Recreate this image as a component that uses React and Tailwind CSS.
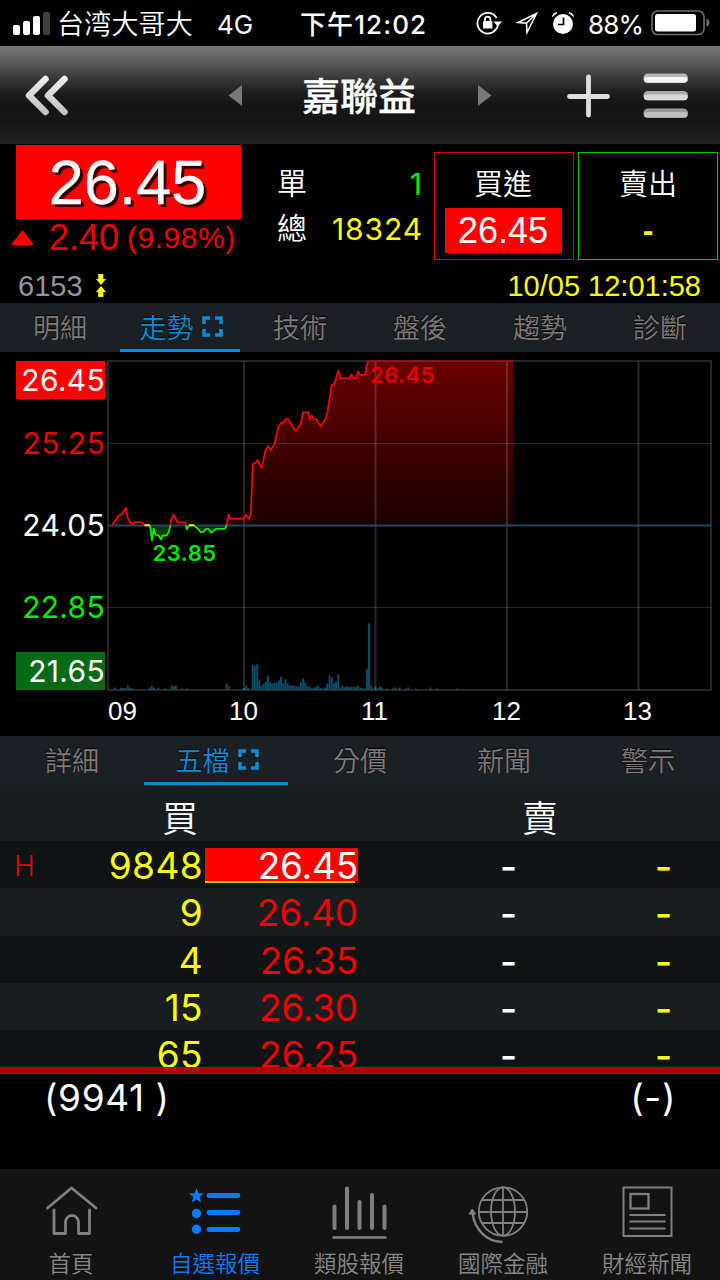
import { useState } from 'react'

const GRAY = '#808080'
const BLUE = '#0a7aff'

// Price line split into the parts above / below the reference price
const UP_LINES = [
  '112.5,525 118,516 122,514 125.7,508 127.7,517.7 132,525 134.3,522.3 142,522.3 144.7,525',
  '170.3,525.3 171.3,519 173.7,514.7 177.7,522.3 185.3,522.3 186,525.3',
  '226.7,525.3 228.7,514.3 230.3,518.7 244,518.7 246,515 248.7,518.7 250.7,515 252.7,464 255.3,463.3 257.3,460.3 261.7,467.7 265.7,449.7 268.3,446 270.7,450.3 274.7,443.3 278.3,426.7 281.3,422.7 283.7,422.3 286,419 288,419 294.7,430 296.7,430 301,423 303,412.3 308,412.3 310,419.7 311.7,415.3 313.7,419 316.7,419.3 320.7,426.7 325.7,418.7 327.7,411 331.7,385 334.3,384.3 338.3,370.7 340.7,378.3 349.3,378.3 351.3,374.3 353.7,378.3 356,378.3 358,371.3 360,375 365,374.7 367,364 368.7,361',
]
const DOWN_LINES = [
  '150,525.5 152,540.5 153.7,528.7 155.5,534.7 158.7,535.7 161,539.7 162.7,535.7 166.7,535.7 169,531.7 170.3,525.3',
  '186,525.3 186.7,529.3 188.7,525.7',
  '194,525.3 198.3,529.3 201,532.5 204,531.5 205.7,529 208.7,529 211,532.5 216,529 225,528.7 226.7,525.3',
]

// [x, height]
const VOLUME = [
  [114.8, 2], [121, 2], [123.2, 1.5], [125.4, 1.5], [127.8, 4], [130, 1.5], [132.2, 1.2], [149.6, 2], [151.8, 4], [154, 2], [158.5, 2], [165, 1],
  [171.6, 4], [173.8, 3.5], [176, 3.5], [182, 1], [187, 1], [226.6, 5.8], [228.8, 3], [244, 1.5], [246.3, 4], [248.4, 1.5],
  [252.7, 25], [254.9, 24], [257.2, 25], [259.4, 10], [261.6, 4], [263.8, 6], [266, 8], [268.1, 14], [270.3, 7], [272.4, 6],
  [274.6, 7], [276.8, 7], [279, 9], [281.2, 13], [283.4, 6], [285.6, 10], [287.8, 6], [290, 4], [292.2, 4], [294.4, 4], [296.6, 3],
  [298.8, 3], [301, 7], [303.3, 11], [305.4, 7], [307.5, 3], [309.7, 3], [311.8, 1], [314, 2], [316.2, 3], [318.4, 4], [320.6, 1.5],
  [323, 1], [325.2, 2], [327.4, 6], [329.6, 14], [331.8, 12], [334, 6], [336.1, 8], [338.3, 15], [340.5, 2], [342.7, 4], [344.9, 2],
  [347, 3], [349.3, 2.5], [351.5, 3], [353.8, 3], [356, 3], [358.2, 4], [360.4, 2], [362.6, 1.5], [364.8, 1], [367, 21], [369, 66],
  [371.3, 4], [373.4, 1], [375.6, 3], [377.8, 1.5], [380, 3], [382.2, 2], [386.6, 1], [393, 1], [395.2, 2], [399.6, 2], [406, 1], [408.4, 2], [416, 1], [430.5, 2], [437, 1], [456.8, 1],
]

const ORDERS = [
  { qty: '9848', price: '26.45', tag: 'H', hot: true },
  { qty: '9', price: '26.40' },
  { qty: '4', price: '26.35' },
  { qty: '15', price: '26.30' },
  { qty: '65', price: '26.25' },
]

function StatusBar() {
  return (
    <div className="flex h-[46px] items-center bg-black font-['Inter','Noto_Sans_CJK_TC',sans-serif] text-white">
      <svg width="38" height="24" className="ml-[13px] mt-0.5 shrink-0" fill="#fff">
        <rect x="0" y="13" width="7" height="10" rx="2" />
        <rect x="10" y="9" width="7" height="14" rx="2" />
        <rect x="20" y="4" width="7" height="19" rx="2" />
        <rect x="30" y="0" width="7" height="23" rx="2" fill="#3f3f3f" />
      </svg>
      <span className="ml-[6px] w-[160px] whitespace-nowrap pb-px font-['Noto_Sans_CJK_SC',sans-serif] text-[27px] font-[350] leading-none tracking-[0.2px]">台湾大哥大</span>
      <span className="w-[83px] pt-[3px] text-[26px] leading-none">4G</span>
      <span className="w-[176px] whitespace-nowrap pt-[3px] text-[26px] font-medium leading-none tracking-[1.1px]">下午12:02</span>
      <svg width="27" height="24" className="shrink-0" fill="none" stroke="#fff" strokeWidth="1.8">
        <path d="M22 13 A10.3 10.3 0 1 1 20.6 7 M20 18 A10.3 10.3 0 0 1 17 21" />
        <path d="M17.5 10.5h8.5l-4.2 5z" fill="#fff" stroke="none" />
        <rect x="7" y="10" width="9.4" height="7.6" rx="1" fill="#fff" stroke="none" />
        <path d="M9 10.5V8.4a2.7 2.7 0 0 1 5.4 0v2.1" />
      </svg>
      <svg width="24" height="24" className="ml-3 shrink-0" fill="none" stroke="#fff" strokeWidth="1.5">
        <path d="M21.500 2.500 L3 11.500 L11.500 12.200 L12 21.500 Z M11.500 12.200 L20.500 3.500" strokeLinejoin="miter" />
      </svg>
      <svg width="24" height="24" className="ml-[12px] shrink-0">
        <circle cx="12" cy="13" r="10" fill="#fff" />
        <path d="M1.500 5.500 Q2 2 6 1.600 Z M22.500 5.500 Q22 2 18 1.600 Z" fill="#fff" stroke="#fff" />
        <path d="M12.500 6.500V13.500H7" fill="none" stroke="#000" strokeWidth="1.700" />
      </svg>
      <span className="ml-[13px] w-[63px] whitespace-nowrap pt-[3px] text-[26px] leading-none tracking-[-0.8px]">88%</span>
      <svg width="60" height="26" className="shrink-0">
        <rect x="1" y="1" width="52" height="23.500" rx="5.500" fill="none" stroke="#6b6b6b" strokeWidth="1.600" />
        <rect x="4" y="4" width="41" height="17.500" rx="2.500" fill="#fff" />
        <path d="M55.500 9 q3 .8 3 3.800 t-3 3.800z" fill="#6b6b6b" />
      </svg>
    </div>
  )
}

function Header() {
  return (
    <div className="flex h-[98px] items-center bg-[linear-gradient(#787878_0%,#585858_18%,#383838_33%,#1c1c1c_49%,#151515_60%,#161616_78%,#212121_98%)]">
      <svg width="54" height="54" className="ml-5 shrink-0" fill="none" strokeWidth="6.500" strokeLinecap="round" strokeLinejoin="round">
        <defs>
          <linearGradient id="silver" gradientUnits="userSpaceOnUse" x1="0" y1="5" x2="0" y2="48">
            <stop offset="0" stopColor="#f4f4f4" />
            <stop offset="1" stopColor="#bdbdbd" />
          </linearGradient>
        </defs>
        <path d="M25.500 11 L9 27.500 L25.500 44 M44.500 11 L28 27.500 L44.500 44" stroke="url(#silver)" />
      </svg>
      <svg width="14" height="22" className="ml-[154px] mt-0.5 shrink-0"><path d="M14 0V21L0.500 10.500z" fill="#737b7f" /></svg>
      <h1 className="w-[234px] pb-0.5 text-center font-['Noto_Sans_CJK_TC',sans-serif] text-[38px] font-medium leading-none text-white [-webkit-text-stroke:0.3px_#fff]">嘉聯益</h1>
      <svg width="14" height="22" className="ml-0.5 mt-0.5 shrink-0"><path d="M0 0V21L13.500 10.500z" fill="#737b7f" /></svg>
      <svg width="44" height="44" className="ml-[74px] mt-0.5 shrink-0" stroke="#dedede" strokeWidth="4.800" strokeLinecap="round">
        <path d="M22.500 3V41M3.500 22.500H41.500" />
      </svg>
      <svg width="46" height="46" className="ml-[33px] mt-0.5 shrink-0">
        {[0.5, 18, 35.5].map((y, i) => (
          <g key={y}>
            <rect x="0.500" y={y} width="44.500" height="9.500" rx="4.500" fill={['#b8b8b8', '#aaaaaa', '#9a9a9a'][i]} />
            <rect x="1" y={y + 3.5} width="43.500" height="5.500" rx="2.700" fill={['#f6f6f6', '#d9d9d9', '#bebebe'][i]} />
          </g>
        ))}
      </svg>
    </div>
  )
}

function Quote() {
  return (
    <div className="bg-black pt-px font-['Liberation_Sans','Noto_Sans_CJK_TC',sans-serif]">
      <div className="flex h-[123px] text-white">
        <div className="w-[260px] shrink-0">
          <div className="ml-4 h-[74px] w-[225px] bg-[#ff0000] pr-0.5 text-center text-[63px] leading-[75px] [-webkit-text-stroke:0.3px_#fff] [text-shadow:3px_3px_1px_#300]">26.45</div>
          <div className="flex h-[38px] items-center whitespace-nowrap text-[#f00000]">
            <svg width="23" height="16" className="ml-[11px] shrink-0"><path d="M0 15L11.500 0L23 15z" fill="#f00" /></svg>
            <span className="ml-[15px] text-[36px] leading-none">2.40</span>
            <span className="ml-2 text-[30px] leading-none tracking-[0.5px]">(9.98%)</span>
          </div>
        </div>
        <div className="flex w-[162px] shrink-0 flex-col pl-[17px] pt-[17px] font-['Inter','Noto_Sans_CJK_TC',sans-serif] text-[30px]">
          <div className="flex h-[45px] items-center justify-between">
            <span className="pb-0.5 text-[30px] font-[350]">單</span>
            <span className="text-[#00f000]">1</span>
          </div>
          <div className="flex h-[45px] items-center justify-between">
            <span className="pb-0.5 text-[30px] font-[350]">總</span>
            <span className="-mr-px tracking-[0.9px] text-[#ffff00]">18324</span>
          </div>
        </div>
        <div className="ml-[12px] mt-[7px] flex h-[108px] w-[140px] shrink-0 flex-col items-center border border-[#d80000] pr-0.5 pt-[9px]">
          <span className="h-[46px] text-[29px] font-[350] leading-[46px]">買進</span>
          <span className="h-[45px] w-[117px] bg-[#ff0000] text-center text-[36px] leading-[46px]">26.45</span>
        </div>
        <div className="ml-[4px] mt-[7px] flex h-[108px] w-[140px] shrink-0 flex-col items-center border border-[#00c800] pt-[9px]">
          <span className="h-[46px] text-[29px] font-[350] leading-[46px]">賣出</span>
          <span className="text-[32px] font-bold leading-[44px] text-[#ffff00]">-</span>
        </div>
      </div>
      <div className="flex h-[34px] items-center pl-[18px] pr-[19px] pt-0.5 text-[29px] leading-none text-[#8e979b]">
        <span>6153</span>
        <svg width="10" height="24" className="ml-[13px]" fill="#ff0">
          <path d="M2.200 0H7.300V5H10L5 11L0 5H2.200z M2.200 23H7.300V18H10L5 12L0 18H2.200z" />
        </svg>
        <span className="ml-auto text-[#ffff00]">10/05 12:01:58</span>
      </div>
    </div>
  )
}

function Tabs({ items, initial }) {
  const [active, setActive] = useState(initial)

  return (
    <div className="flex h-[49px] shrink-0 bg-[#1a2024] font-['Noto_Sans_CJK_TC',sans-serif] text-[27px] font-[350]">
      {items.map((item, i) => (
        <button
          key={item}
          onClick={() => setActive(i)}
          className={`flex flex-1 items-center justify-center whitespace-nowrap border-b-[3px] pt-px leading-none [text-shadow:0_-1px_1px_#000] ${
            i === active ? 'border-[#0d8bd6] text-[#0d8bd6]' : 'border-transparent text-[#81787a]'
          }`}
        >
          {item}
          {i === active && (
            <svg width="21" height="21" className="-mr-0.5 ml-2 shrink-0" fill="none" stroke="#0d8bd6" strokeWidth="3.500">
              <path d="M2 8V2H8M13 2H19V8M19 13V19H13M8 19H2V13" />
            </svg>
          )}
        </button>
      ))}
    </div>
  )
}

function Chart() {
  return (
    <div className="flex h-[384px] bg-black font-['Inter',sans-serif]">
      <div className="flex w-[106px] shrink-0 flex-col pl-4 pr-px pt-[9px] text-right text-[30px] leading-[39px] tracking-[0.3px] text-white">
        <div className="h-[38px] bg-[#ff0000]">26.45</div>
        <div className="mt-[25px] h-[38px] text-[#f00000]">25.25</div>
        <div className="mt-[44px] h-[38px]">24.05</div>
        <div className="mt-[44px] h-[38px] text-[#00f000]">22.85</div>
        <div className="mt-[26px] h-[38px] bg-[#066a18]">21.65</div>
      </div>
      <div className="w-[614px]">
        <svg width="614" height="342" viewBox="106 352 614 342">
          <defs>
            <linearGradient id="up" gradientUnits="userSpaceOnUse" x1="0" y1="361" x2="0" y2="525">
              <stop offset="0" stopColor="#6a0000" />
              <stop offset="1" stopColor="#1a0000" />
            </linearGradient>
            <linearGradient id="down" gradientUnits="userSpaceOnUse" x1="0" y1="525" x2="0" y2="540">
              <stop offset="0" stopColor="#0a2a0a" />
              <stop offset="1" stopColor="#0a500a" />
            </linearGradient>
          </defs>
          {UP_LINES.map((p, i) => (
            <polygon key={p} points={i === 2 ? `${p} 513.5,361 513.5,525` : p} fill="url(#up)" />
          ))}
          {DOWN_LINES.map(p => <polygon key={p} points={p} fill="url(#down)" />)}
          <g fill="#06506a">
            {VOLUME.map(([x, h]) => <rect key={x} x={x - 1} y={689.5 - h} width="1.900" height={h} />)}
          </g>
          <g fill="none" stroke="#fff" strokeOpacity="0.150">
            <rect x="108" y="361" width="603" height="329" strokeWidth="2" />
            <path d="M244 361V690M375.500 361V690M507 361V690M638.500 361V690" strokeWidth="2" />
            <path d="M108 443.500H711M108 607.500H711" strokeWidth="1.200" />
          </g>
          <path d="M108 525.500H711" stroke="#27485a" strokeWidth="1.800" />
          <g fill="none" strokeWidth="1.700" strokeLinejoin="round">
            {UP_LINES.map(p => <polyline key={p} points={p} stroke="#ff0000" />)}
            {DOWN_LINES.map(p => <polyline key={p} points={p} stroke="#00ff00" />)}
            <path d="M144.500 525.200H150M189 525.200H194" stroke="#ffff00" strokeWidth="2" />
            <path d="M368.700 361H513" stroke="#a01010" />
          </g>
          <text x="370" y="382.500" fontSize="22" fontWeight="600" letterSpacing="0.500" fill="#e60000">26.45</text>
          <text x="152.500" y="560.500" fontSize="22" fontWeight="600" letterSpacing="0.500" fill="#00e600">23.85</text>
        </svg>
        <div className="flex pl-[2px] font-['Liberation_Sans',sans-serif] text-[26px] leading-[34px] text-white">
          <span className="w-[121px]">09</span>
          <span className="w-[132px]">10</span>
          <span className="w-[131px]">11</span>
          <span className="w-[131px]">12</span>
          <span>13</span>
        </div>
      </div>
    </div>
  )
}

function OrderBook() {
  return (
    <div className="flex h-[282px] shrink-0 flex-col overflow-hidden bg-[#0f1315] font-['Inter','Noto_Sans_CJK_TC',sans-serif] text-[37px] text-white">
      <div className="flex h-[56px] shrink-0 items-center bg-[#181d20] pt-3 text-[36px] font-[350]">
        <span className="flex-1 text-center">買</span>
        <span className="flex-1 text-center">賣</span>
      </div>
      {ORDERS.map((row, i) => (
        <div key={row.qty} className={`flex h-[47.3px] shrink-0 items-center pt-0.5 leading-none ${i % 2 ? 'bg-[#181d20]' : 'bg-[#0f1315]'}`}>
          <span className="w-[40px] pl-[14px] text-[28px] font-light text-[#e80000]">{row.tag}</span>
          <span className="w-[163px] text-right tracking-[0.4px] text-[#ffff00]">{row.qty}</span>
          <span className="ml-[2px] flex w-[153px] flex-col">
            <span className={`h-[33px] text-right leading-[35px] tracking-[-0.2px] ${row.hot ? 'bg-[#ff0000] text-white' : 'text-[#f00000]'}`}>{row.price}</span>
            <span className={`h-0.5 w-[150px] ${row.hot ? 'bg-[#c8c800]' : ''}`} />
          </span>
          <span className="w-[159px] pt-0.5 text-right font-medium">-</span>
          <span className="w-[155px] pt-0.5 text-right font-medium text-[#ffff00]">-</span>
        </div>
      ))}
    </div>
  )
}

function HomeIcon() {
  return (
    <svg width="56" height="56" fill="none" stroke={GRAY} strokeWidth="2.800" strokeLinecap="round" strokeLinejoin="round">
      <path d="M4.500 23L28.500 3L53 23M11 25V48.500H22.500V37a6.500 6.500 0 0 1 13 0V48.500H46.500V25" />
    </svg>
  )
}

function ListIcon() {
  return (
    <svg width="56" height="56" fill={BLUE}>
      <path d="M9.500 3l2 5.200 5.500.3-4.300 3.500 1.500 5.500-4.700-3.100-4.700 3.100 1.500-5.500L2 8.500l5.500-.3z" />
      <circle cx="9.500" cy="28.500" r="4.700" />
      <circle cx="9.500" cy="44.300" r="4.700" />
      <path d="M22 10.500H51M22 27.500H51M22 44.500H51" stroke={BLUE} strokeWidth="4.800" strokeLinecap="round" />
    </svg>
  )
}

function BarsIcon() {
  return (
    <svg width="56" height="56" stroke={GRAY} strokeLinecap="round">
      <path d="M3.500 21.500V43M16 3.500V43M28.500 17V43M41 10V43M53.500 21.500V43" strokeWidth="4" />
      <path d="M2.500 52.500H54.500" strokeWidth="2.400" />
    </svg>
  )
}

function GlobeIcon() {
  return (
    <svg width="60" height="60" fill="none" stroke={GRAY} strokeWidth="1.800">
      <circle cx="30" cy="26.500" r="24.200" />
      <ellipse cx="30" cy="26.500" rx="12" ry="24.200" />
      <path d="M30 2.500V50.500M6 27H54M9 15H51M9 38H51" />
      <path d="M-.5 28C1.500 44 13 56.500 29.500 57" strokeWidth="2.300" />
      <path d="M-4 29L-.8 24L2.800 29z" fill={GRAY} strokeWidth="1" />
    </svg>
  )
}

function NewsIcon() {
  return (
    <svg width="56" height="56" fill="none" stroke={GRAY}>
      <rect x="4.500" y="2.500" width="48" height="48.500" strokeWidth="2" />
      <rect x="11.500" y="9" width="18" height="14.500" strokeWidth="2.300" />
      <path d="M10.500 30H46.500M10.500 36.500H46.500M10.500 43.500H46.500" strokeWidth="2.100" />
    </svg>
  )
}

const NAV = [
  { label: '首頁', Icon: HomeIcon },
  { label: '自選報價', Icon: ListIcon, active: true },
  { label: '類股報價', Icon: BarsIcon },
  { label: '國際金融', Icon: GlobeIcon },
  { label: '財經新聞', Icon: NewsIcon },
]

function BottomNav() {
  return (
    <nav className="flex h-[111px] shrink-0 bg-[#131313] font-['Noto_Sans_CJK_TC',sans-serif] text-[22.500px] font-[350] leading-none">
      {NAV.map(({ label, Icon, active }) => (
        <button key={label} className={`flex w-36 shrink-0 flex-col items-center pr-0.5 pt-4 ${active ? 'text-[#0a7aff]' : 'text-[#888888]'}`}>
          <span className="flex h-[60px] items-start [&>svg]:overflow-visible"><Icon /></span>
          <span className="mt-[6px] whitespace-nowrap">{label}</span>
        </button>
      ))}
    </nav>
  )
}

export default function App() {
  return (
    <div className="flex h-[1280px] w-[720px] flex-col overflow-hidden bg-black">
      <StatusBar />
      <Header />
      <Quote />
      <div className="h-px shrink-0 bg-black" />
      <Tabs items={['明細', '走勢', '技術', '盤後', '趨勢', '診斷']} initial={1} />
      <Chart />
      <Tabs items={['詳細', '五檔', '分價', '新聞', '警示']} initial={1} />
      <OrderBook />
      {/* Totals */}
      <div className="flex h-[102px] shrink-0 items-start justify-between border-t-[7px] border-[#b00000] bg-black pl-[44px] pr-[44px] pt-1.5 font-['Inter',sans-serif] text-[37px] leading-[36px] tracking-[0.6px] text-white">
        <span>(9941 )</span>
        <span>(-)</span>
      </div>
      <BottomNav />
    </div>
  )
}
